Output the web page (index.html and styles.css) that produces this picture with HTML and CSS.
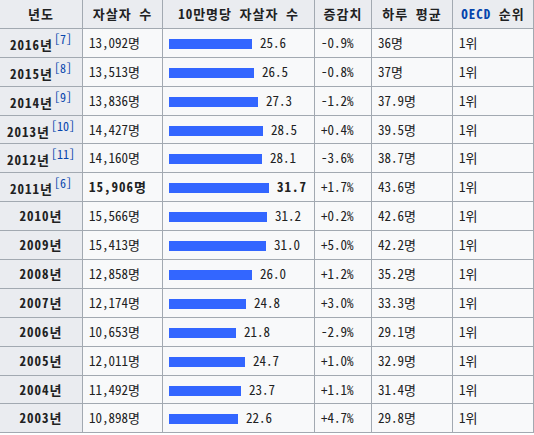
FILE: index.html
```html
<!DOCTYPE html>
<html lang="ko">
<head>
<meta charset="utf-8">
<link rel="stylesheet" href="styles.css">
</head>
<body>
<table class="stats">
  <colgroup>
    <col class="c-year"><col class="c-count"><col class="c-rate"><col class="c-delta"><col class="c-avg"><col class="c-rank">
  </colgroup>
  <thead>
    <tr><th>년도</th><th>자살자 수</th><th>10만명당 자살자 수</th><th>증감치</th><th>하루 평균</th><th><span class="link">OECD</span> 순위</th></tr>
  </thead>
  <tbody>
    <tr><th>2016년<sup>[7]</sup></th><td>13,092명</td><td><span class="bar" style="width:83px"></span>25.6</td><td>-0.9%</td><td>36명</td><td>1위</td></tr>
    <tr><th>2015년<sup>[8]</sup></th><td>13,513명</td><td><span class="bar" style="width:85px"></span>26.5</td><td>-0.8%</td><td>37명</td><td>1위</td></tr>
    <tr><th>2014년<sup>[9]</sup></th><td>13,836명</td><td><span class="bar" style="width:89px"></span>27.3</td><td>-1.2%</td><td>37.9명</td><td>1위</td></tr>
    <tr><th>2013년<sup>[10]</sup></th><td>14,427명</td><td><span class="bar" style="width:94px"></span>28.5</td><td>+0.4%</td><td>39.5명</td><td>1위</td></tr>
    <tr><th>2012년<sup>[11]</sup></th><td>14,160명</td><td><span class="bar" style="width:93px"></span>28.1</td><td>-3.6%</td><td>38.7명</td><td>1위</td></tr>
    <tr><th>2011년<sup>[6]</sup></th><td><b>15,906명</b></td><td><span class="bar" style="width:100px"></span><b>31.7</b></td><td>+1.7%</td><td>43.6명</td><td>1위</td></tr>
    <tr><th>2010년</th><td>15,566명</td><td><span class="bar" style="width:98px"></span>31.2</td><td>+0.2%</td><td>42.6명</td><td>1위</td></tr>
    <tr><th>2009년</th><td>15,413명</td><td><span class="bar" style="width:97px"></span>31.0</td><td>+5.0%</td><td>42.2명</td><td>1위</td></tr>
    <tr><th>2008년</th><td>12,858명</td><td><span class="bar" style="width:83px"></span>26.0</td><td>+1.2%</td><td>35.2명</td><td>1위</td></tr>
    <tr><th>2007년</th><td>12,174명</td><td><span class="bar" style="width:77px"></span>24.8</td><td>+3.0%</td><td>33.3명</td><td>1위</td></tr>
    <tr><th>2006년</th><td>10,653명</td><td><span class="bar" style="width:67px"></span>21.8</td><td>-2.9%</td><td>29.1명</td><td>1위</td></tr>
    <tr><th>2005년</th><td>12,011명</td><td><span class="bar" style="width:76px"></span>24.7</td><td>+1.0%</td><td>32.9명</td><td>1위</td></tr>
    <tr><th>2004년</th><td>11,492명</td><td><span class="bar" style="width:72px"></span>23.7</td><td>+1.1%</td><td>31.4명</td><td>1위</td></tr>
    <tr><th>2003년</th><td>10,898명</td><td><span class="bar" style="width:69px"></span>22.6</td><td>+4.7%</td><td>29.8명</td><td>1위</td></tr>
  </tbody>
</table>
</body>
</html>
```
FILE: styles.css
```css
html, body {
  margin: 0;
  padding: 0;
  background: #ffffff;
}
body {
  font-family: "Noto Sans Mono CJK KR", "Noto Sans CJK KR", sans-serif;
  font-size: 13px;
  color: #202122;
}
.stats {
  border-collapse: collapse;
  table-layout: fixed;
  margin: -1px 0 0 -1px;
  background: #f8f9fa;
  border: 1px solid #a2a9b1;
  width: 535px;
}
.c-year { width: 83px; }
.c-count { width: 80px; }
.c-rate { width: 152px; }
.c-delta { width: 57px; }
.c-avg { width: 81px; }
.c-rank { width: 81px; }
.stats th, .stats td {
  border: 1px solid #a2a9b1;
  height: 27.9px;
  padding: 0 6px;
  line-height: 16px;
  white-space: nowrap;
  overflow: hidden;
}
.stats th {
  background: #eaecf0;
  font-weight: bold;
  text-align: center;
  letter-spacing: 1px;
}
.stats td {
  text-align: left;
}
.stats b {
  font-weight: bold;
  letter-spacing: 1px;
}
.stats sup {
  font-weight: normal;
  font-size: 12px;
  line-height: 1;
  letter-spacing: 0;
  color: #0645ad;
  vertical-align: 6px;
  margin-left: 1px;
}
.link {
  color: #0645ad;
}
.bar {
  display: inline-block;
  height: 10px;
  background: #3366ff;
  margin-right: 8px;
  vertical-align: -1px;
}
```
